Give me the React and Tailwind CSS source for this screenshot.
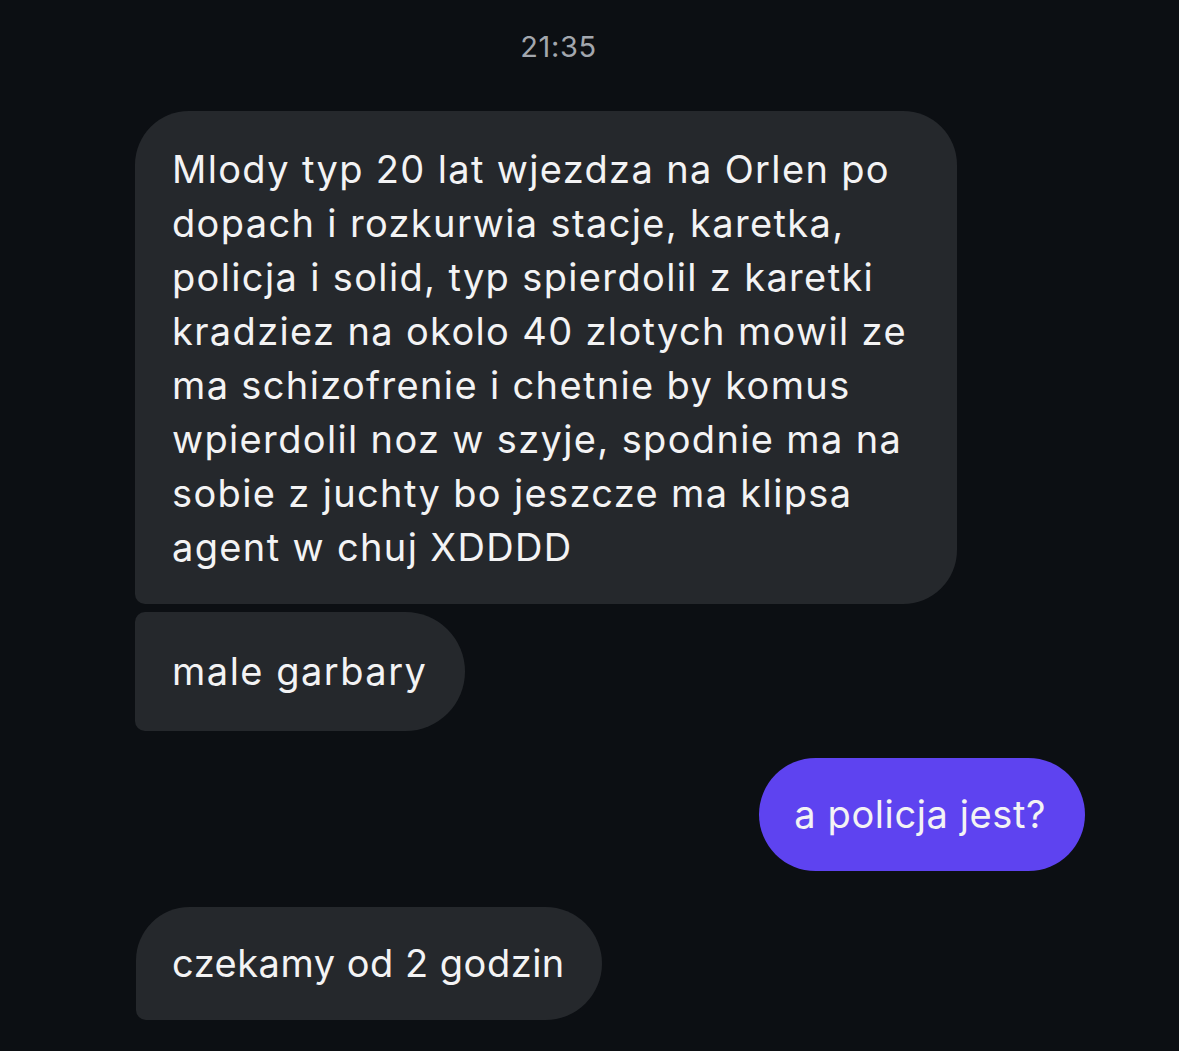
export default function App() {
  const lines = [
    "Mlody typ 20 lat wjezdza na Orlen po",
    "dopach i rozkurwia stacje, karetka,",
    "policja i solid, typ spierdolil z karetki",
    "kradziez na okolo 40 zlotych mowil ze",
    "ma schizofrenie i chetnie by komus",
    "wpierdolil noz w szyje, spodnie ma na",
    "sobie z juchty bo jeszcze ma klipsa",
    "agent w chuj XDDDD",
  ];
  return (
    <div
      className="w-[1179px] h-[1051px] bg-[#0c0f13] overflow-hidden flex flex-col text-[#f3f3f4]"
      style={{ fontFamily: "Inter, 'Noto Sans', sans-serif" }}
    >
      <div className="h-[111px] flex justify-center pr-[62px] pt-[29px] text-[29px] leading-[36px] tracking-[0.6px] text-[#a3a7ae]">
        21:35
      </div>
      <div className="flex flex-col pl-[135px] pr-[94px] text-[38px] leading-[54px]">
        <div className="self-start w-[822px] bg-[#25282c] rounded-tl-[54px] rounded-tr-[54px] rounded-br-[54px] rounded-bl-[10px] pl-[37px] pr-[20px] pt-[31px] pb-[30px] tracking-[1.35px]">
          {lines.map((l, i) => (
            <div key={i} className="whitespace-nowrap">{l}</div>
          ))}
        </div>
        <div className="self-start mt-[8px] bg-[#25282c] rounded-tl-[10px] rounded-bl-[10px] rounded-r-[60px] pl-[37px] pr-[38px] pt-[32px] pb-[33px] whitespace-nowrap tracking-[1.5px]">
          male garbary
        </div>
        <div className="self-end mt-[27px] bg-[#5e43f0] rounded-[57px] pl-[35px] pr-[39px] pt-[29px] pb-[30px] whitespace-nowrap tracking-[0.6px]">
          a policja jest?
        </div>
        <div className="self-start mt-[36px] ml-[1px] bg-[#25282c] rounded-tl-[54px] rounded-bl-[10px] rounded-r-[57px] pl-[36px] pr-[37px] pt-[29px] pb-[30px] whitespace-nowrap tracking-[0.5px]">
          czekamy od 2 godzin
        </div>
      </div>
    </div>
  );
}
